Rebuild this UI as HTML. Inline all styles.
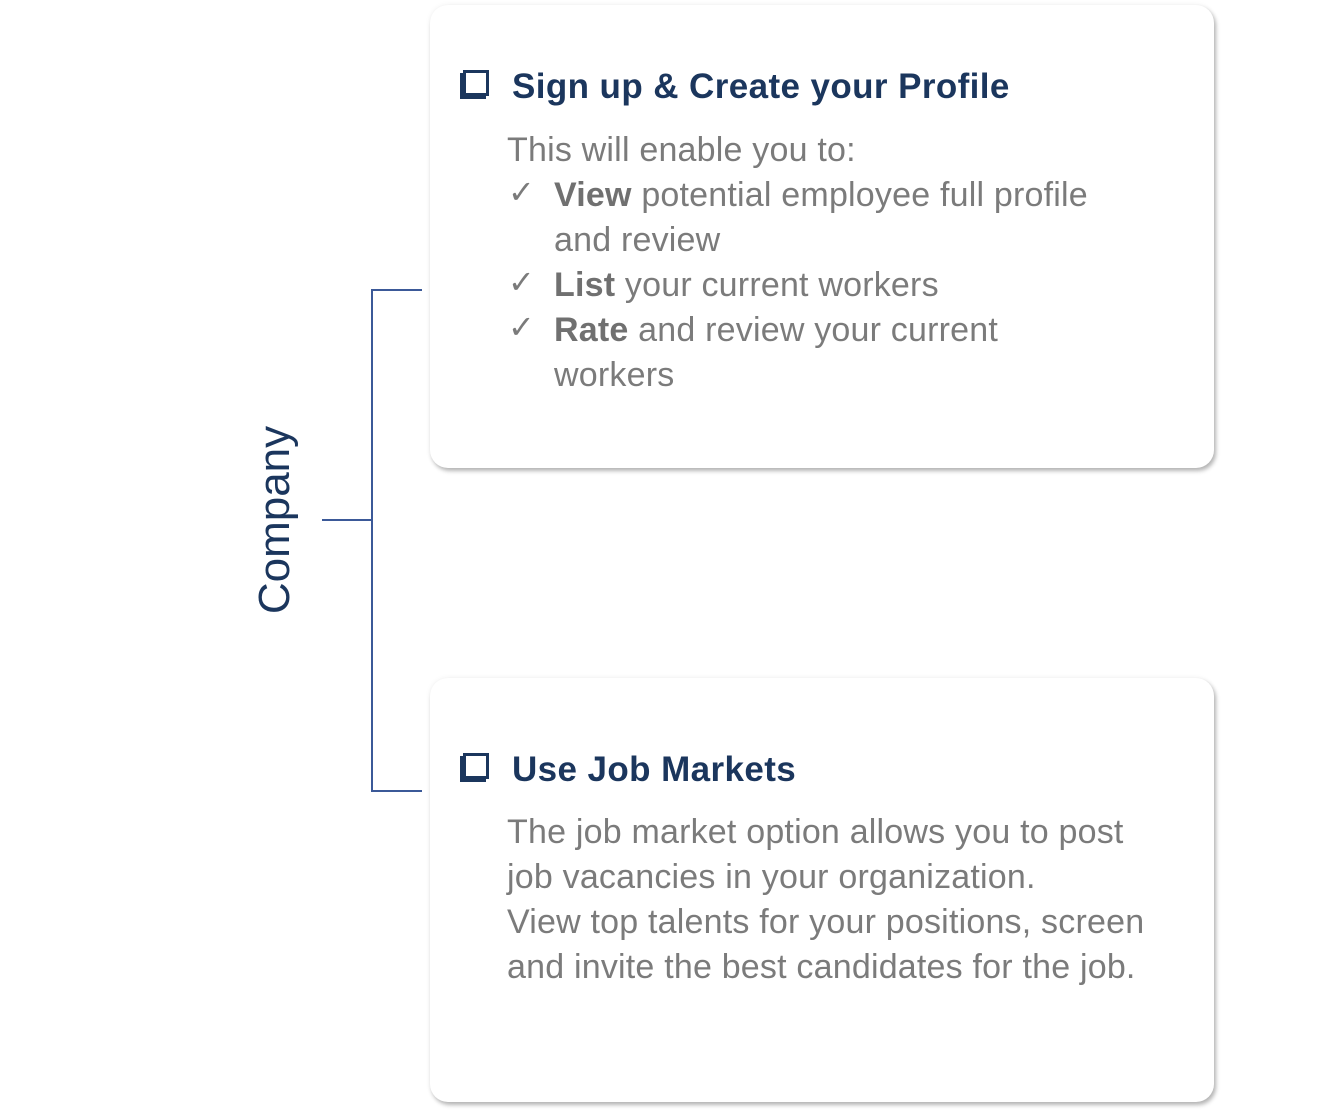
<!DOCTYPE html>
<html><head><style>
body{margin:0;width:1333px;height:1116px;background:#fff;position:relative;font-family:"Liberation Sans",Calibri,sans-serif;overflow:hidden}
.card{position:absolute;left:430px;width:784px;background:#fff;border-radius:18px;box-shadow:2px 3px 4px rgba(0,0,0,.28),0 0 6px rgba(0,0,0,.06)}
.t{position:absolute;left:512px;color:#1b365d;font-weight:bold;font-size:35px;white-space:nowrap;line-height:40px;letter-spacing:0.4px}
.cb{position:absolute;left:463px;width:20px;height:20px;border:3px solid #1b365d;box-shadow:-3px 3px 0 #1b365d}
.p{position:absolute;color:#7b7b7b;font-size:34px;line-height:45px;white-space:nowrap;letter-spacing:0.2px}
.p b{color:#707070}
.ck{position:absolute;left:508px;color:#7b7b7b;font-size:32px;line-height:36px}
.l{position:absolute;background:#3b5998}
</style></head><body>
<div class="card" style="top:5px;height:463px"></div>
<div class="card" style="top:678px;height:424px"></div>
<div class="cb" style="top:70px"></div>
<div class="t" style="top:67px">Sign up &amp; Create your Profile</div>
<div class="p" style="left:507px;top:128px">This will enable you to:</div>
<div class="ck" style="top:174px">✓</div>
<div class="ck" style="top:264px">✓</div>
<div class="ck" style="top:309px">✓</div>
<div class="p" style="left:554px;top:173px"><b>View</b> potential employee full profile<br>and review<br><b>List</b> your current workers<br><b>Rate</b> and review your current<br>workers</div>
<div class="cb" style="top:753px"></div>
<div class="t" style="top:750px">Use Job Markets</div>
<div class="p" style="left:507px;top:810px">The job market option allows you to post<br>job vacancies in your organization.<br>View top talents for your positions, screen<br>and invite the best candidates for the job.</div>
<div style="position:absolute;left:275px;top:520px;transform:translate(-50%,-50%) rotate(-90deg);color:#1b365d;font-size:44px;white-space:nowrap">Company</div>
<div class="l" style="left:371px;top:289px;width:1.5px;height:503px"></div>
<div class="l" style="left:371px;top:289px;width:51px;height:1.5px"></div>
<div class="l" style="left:371px;top:790px;width:51px;height:1.5px"></div>
<div class="l" style="left:322px;top:519px;width:50px;height:1.5px"></div>
</body></html>
